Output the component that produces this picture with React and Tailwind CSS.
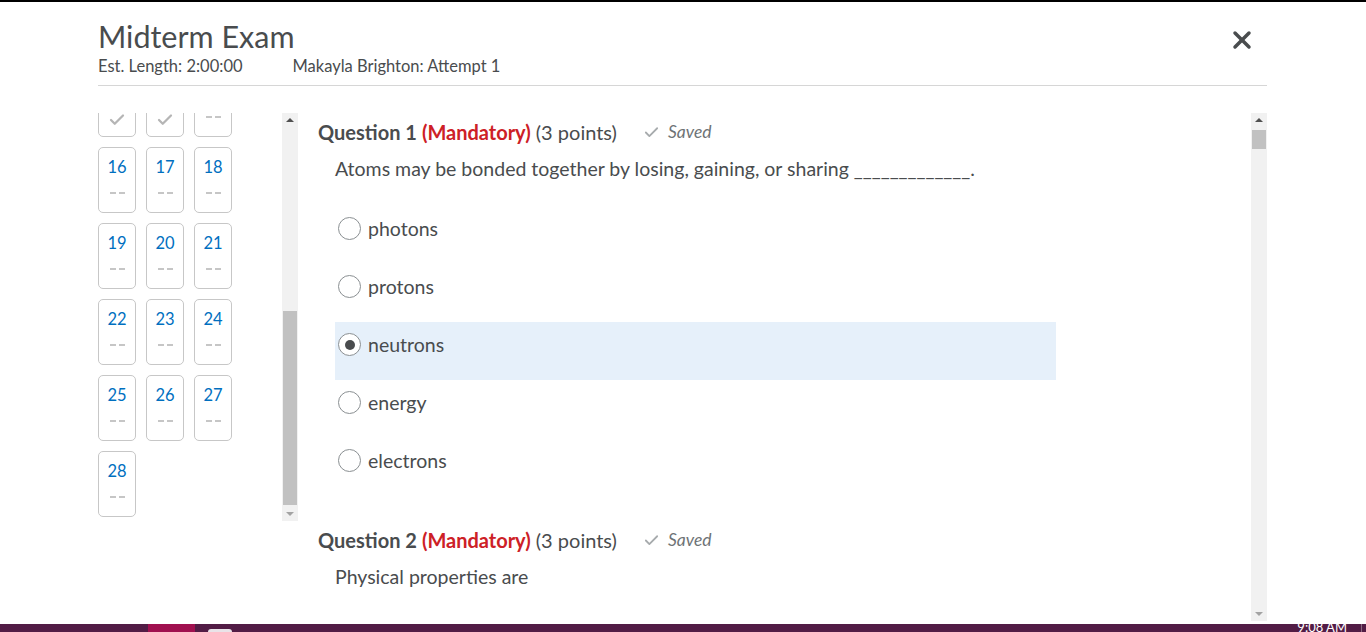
import { Check, X } from "lucide-react";

const tiles = [
    { n: null, done: true },
    { n: null, done: true },
    { n: null, done: false },
    ...Array.from({ length: 13 }, (_, i) => ({ n: 16 + i, done: false })),
];

const options = ["photons", "protons", "neutrons", "energy", "electrons"];

export default function App() {
    return (
        <div
            className="relative h-[632px] w-[1366px] overflow-hidden border-t-2 border-black bg-white text-[#494c4e]"
            style={{ fontFamily: "Lato, 'Open Sans', sans-serif" }}
        >
            {/* Encabezado */}
            <div className="ml-[98px] w-[1169px]">
                <div className="flex items-start justify-between pt-[16px]">
                    <div>
                        <h1 className="text-[30.5px] leading-[36px] text-[#494c4e]">Midterm Exam</h1>
                        <div className="mt-[2px] flex gap-[50px] text-[16.5px] leading-[20px] text-[#494c4e]">
                            <span>Est. Length: 2:00:00</span>
                            <span>Makayla Brighton: Attempt 1</span>
                        </div>
                    </div>
                    <button className="mr-[11px] mt-[8px] text-[#494c4e]">
                        <X size={28} strokeWidth={3} />
                    </button>
                </div>
                <div className="mt-[9px] h-px bg-[#d6d6d6]" />
            </div>

            {/* Cuerpo */}
            <div className="ml-[98px] mt-[27px] flex w-[1169px]">
                {/* Navegación de preguntas */}
                <div className="flex h-[408px]">
                    <div className="h-full w-[184px] overflow-hidden">
                        <div className="-mt-[42px] grid w-[134px] grid-cols-3 gap-[10px]">
                            {tiles.map((t, i) => (
                                <div
                                    key={i}
                                    className="flex h-[66px] w-[38px] flex-col items-center rounded-[5px] border border-[#c7c7c7] bg-white"
                                >
                                    {t.n ? (
                                        <span className="mt-[8px] text-[16.5px] leading-[22px] text-[#006fbf]">{t.n}</span>
                                    ) : (
                                        <span className="mt-[8px] h-[22px]" />
                                    )}
                                    {t.done ? (
                                        <Check size={18} strokeWidth={3} className="mt-[9px] text-[#b5b5b5]" />
                                    ) : (
                                        <span className="mt-[14px] flex gap-[3px]">
                                            <span className="h-[2px] w-[6px] bg-[#c6c6c6]" />
                                            <span className="h-[2px] w-[6px] bg-[#c6c6c6]" />
                                        </span>
                                    )}
                                </div>
                            ))}
                        </div>
                    </div>
                    <Scrollbar thumbTop={198} thumbHeight={194} />
                </div>

                {/* Contenido del examen */}
                <div className="ml-[3px] flex h-[508px] flex-1">
                    <div className="flex-1 overflow-hidden pl-[17px] pt-[6px]">
                        <QuestionHeader number={1} />
                        <p className="mt-[11px] pl-[17px] text-[19.5px] leading-[26px]">
                            Atoms may be bonded together by losing, gaining, or sharing _____________.
                        </p>
                        <div className="mt-[24px] w-[721px] pl-[17px]">
                            {options.map((opt) => {
                                const selected = opt === "neutrons";
                                return (
                                    <div
                                        key={opt}
                                        className={`flex h-[58px] w-[721px] items-start gap-[7px] pl-[3px] pt-[11px] ${
                                            selected ? "bg-[#e6f0fa]" : ""
                                        }`}
                                    >
                                        <span className="flex h-[23px] w-[23px] items-center justify-center rounded-full border border-[#8a8f92] bg-white">
                                            {selected && <span className="h-[10px] w-[10px] rounded-full bg-[#494c4e]" />}
                                        </span>
                                        <span className="text-[19.5px] leading-[23px]">{opt}</span>
                                    </div>
                                );
                            })}
                        </div>
                        <div className="mt-[31px]">
                            <QuestionHeader number={2} />
                            <p className="mt-[11px] pl-[17px] text-[19.5px] leading-[26px]">Physical properties are</p>
                        </div>
                    </div>
                    <Scrollbar thumbTop={17} thumbHeight={19} />
                </div>
            </div>

            {/* Barra de tareas */}
            <div className="absolute bottom-0 left-0 flex h-[8px] w-full items-start bg-[#521c45]">
                <div className="ml-[148px] h-full w-[47px] bg-[#a0104f]" />
                <div className="ml-[13px] mt-[5px] h-[3px] w-[24px] rounded-t-sm bg-[#e9e3e8]" />
                <div className="ml-auto mr-[14px] -mt-[5px] text-[13px] leading-[16px] text-white">9:08 AM</div>
                <div className="mr-[4px] h-full w-px bg-[#8a6a80]" />
            </div>
        </div>
    );
}

function QuestionHeader({ number }) {
    return (
        <div className="flex items-center text-[20px] leading-[26px]">
            <span className="font-bold">Question {number}</span>
            <span className="ml-[5px] font-bold text-[#cd2026]">(Mandatory)</span>
            <span className="ml-[5px]">(3 points)</span>
            <span className="ml-[26px] flex items-center gap-[8px] text-[17.5px] italic text-[#6e7376]">
                <Check size={17} strokeWidth={2.5} className="text-[#a7abad]" />
                Saved
            </span>
        </div>
    );
}

function Scrollbar({ thumbTop, thumbHeight }) {
    return (
        <div className="relative h-full w-[16px] bg-[#f1f1f1]">
            <span className="absolute left-1/2 top-[5px] h-0 w-0 -translate-x-1/2 border-x-[4px] border-b-[4px] border-x-transparent border-b-[#505050]" />
            <div
                className="absolute left-[1px] right-[1px] bg-[#c1c1c1]"
                style={{ top: thumbTop, height: thumbHeight }}
            />
            <span className="absolute bottom-[5px] left-1/2 h-0 w-0 -translate-x-1/2 border-x-[4px] border-t-[4px] border-x-transparent border-t-[#a3a3a3]" />
        </div>
    );
}
